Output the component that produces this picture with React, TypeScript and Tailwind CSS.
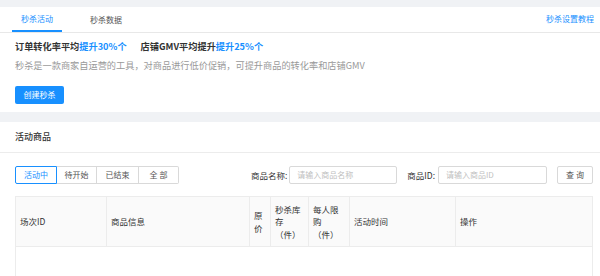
import React from "react";

export default function App() {
  const cols = [
    { t: "场次ID", w: "w-[91px]", s: "w-full" },
    { t: "商品信息", w: "w-[143px]", s: "w-full" },
    { t: "原价", w: "w-[21px]", s: "w-[10px]" },
    { t: "秒杀库存（件）", w: "w-[38px]", s: "w-[27px]" },
    { t: "每人限购（件）", w: "w-[41px]", s: "w-[27px]" },
    { t: "活动时间", w: "w-[106px]", s: "w-full" },
    { t: "操作", w: "w-[138px]", s: "w-full" },
  ];
  const segs = [
    { t: "活动中", w: "w-[42px]", a: true },
    { t: "待开始", w: "w-[40px]", a: false },
    { t: "已结束", w: "w-[42px]", a: false },
    { t: "全 部", w: "w-[40px]", a: false },
  ];
  return (
    <div
      className="w-[600px] h-[276px] bg-[#f0f2f5] pt-[7px] overflow-hidden flex flex-col text-[#333]"
      style={{ fontFamily: '"Noto Sans CJK SC", "Noto Sans", sans-serif' }}
    >
      {/* top panel */}
      <div className="bg-white pb-[8px]">
        <div className="h-[26px] flex items-stretch justify-between border-b border-[#e8e8e8] pl-[12px] pr-[6px]">
          <div className="flex gap-[19px]">
            <div className="w-[50px] h-[25px] flex items-center justify-center border-b-2 border-[#1890ff] text-[8px] text-[#1890ff]">
              秒杀活动
            </div>
            <div className="w-[50px] h-[25px] flex items-center justify-center text-[8px] text-[#555]">
              秒杀数据
            </div>
          </div>
          <div className="flex items-center text-[8px] text-[#1890ff] pb-[1px]">秒杀设置教程</div>
        </div>
        <div className="px-[15px]">
          <div className="mt-[6px] h-[14px] flex items-center text-[9.2px] font-bold leading-[14px]">
            <span>订单转化率平均</span>
            <span className="text-[#1890ff]">提升30%个</span>
            <span className="ml-[14px]">店铺GMV平均提升</span>
            <span className="text-[#1890ff]">提升25%个</span>
          </div>
          <div className="mt-[5px] h-[14px] text-[9.2px] leading-[14px] text-[#999]">
            秒杀是一款商家自运营的工具，对商品进行低价促销，可提升商品的转化率和店铺GMV
          </div>
          <button className="mt-[14px] w-[49px] h-[18px] rounded-[2px] bg-[#1890ff] text-white text-[8px] flex items-center justify-center">
            创建秒杀
          </button>
        </div>
      </div>

      {/* gap */}
      <div className="h-[10px] shrink-0" />

      {/* bottom panel */}
      <div className="bg-white flex-1">
        <div className="h-[31px] flex items-center px-[15px] border-b border-[#ececec] text-[9px] font-medium">
          活动商品
        </div>
        <div className="mt-[13px] h-[18px] flex items-center pl-[15px] pr-[7px]">
          <div className="flex h-[18px]">
            {segs.map((s, i) => (
              <div
                key={i}
                className={
                  s.a
                    ? `${s.w} h-[18px] flex items-center justify-center text-[8px] text-[#1890ff] border border-[#1890ff] rounded-l-[2px] bg-white`
                    : `${s.w} h-[18px] flex items-center justify-center text-[8px] text-[#555] border-y border-r border-[#d9d9d9] ${i === 3 ? "rounded-r-[2px]" : ""}`
                }
              >
                {s.t}
              </div>
            ))}
          </div>
          <div className="flex-1" />
          <span className="text-[8.5px] text-[#333] mr-[2px]">商品名称:</span>
          <div className="w-[108px] h-[18px] border border-[#d9d9d9] rounded-[2px] flex items-center pl-[7px] text-[8px] text-[#c0c0c0]">
            请输入商品名称
          </div>
          <span className="ml-[10px] text-[8.5px] text-[#333] mr-[3px]">商品ID:</span>
          <div className="w-[109px] h-[18px] border border-[#d9d9d9] rounded-[2px] flex items-center pl-[7px] text-[8px] text-[#c0c0c0]">
            请输入商品ID
          </div>
          <button className="ml-[10px] w-[36px] h-[18px] border border-[#d9d9d9] rounded-[2px] flex items-center justify-center text-[8px] text-[#555]">
            查 询
          </button>
        </div>
        <div className="mt-[12px] ml-[15px] w-[578px] h-[200px] border-x border-t border-[#ececec]">
          <div className="flex h-[50px] bg-[#fafafa] border-b border-[#ececec]">
            {cols.map((c, i) => (
              <div
                key={i}
                className={`${c.w} shrink-0 h-full flex items-center px-[4px] text-[8.5px] leading-[12.5px] text-[#333] ${i < cols.length - 1 ? "border-r border-[#ececec]" : ""}`}
              >
                <span className={`block ${c.s}`}>{c.t}</span>
              </div>
            ))}
          </div>
        </div>
      </div>
    </div>
  );
}
